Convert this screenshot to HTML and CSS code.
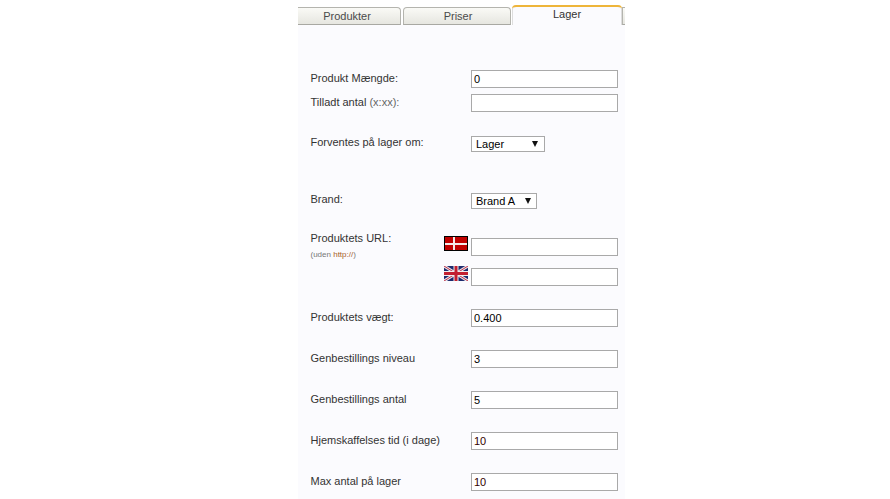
FILE: index.html
```html
<!DOCTYPE html>
<html lang="da">
<head>
<meta charset="utf-8">
<title>Lager</title>
<link rel="stylesheet" href="styles.css">
</head>
<body>
<main class="panel">
  <nav class="tabs">
    <a class="tab tab-a">Produkter</a>
    <a class="tab tab-b">Priser</a>
    <a class="tab tab-active">Lager</a>
    <a class="tab tab-end"></a>
  </nav>
  <form class="form">
    <div class="row r1"><span class="label">Produkt Mængde:</span><input class="field" value="0"></div>
    <div class="row r2"><span class="label">Tilladt antal <span class="muted">(x:xx):</span></span><input class="field"></div>
    <div class="row r3"><span class="label">Forventes på lager om:</span><div class="select s1"><span>Lager</span><i class="arrow"></i></div></div>
    <div class="row r4"><span class="label">Brand:</span><div class="select s2"><span>Brand A</span><i class="arrow"></i></div></div>
    <div class="row r5 url">
      <div class="label urllabel">Produktets URL:<small class="hint">(uden <b>http://</b>)</small></div>
      <div class="flagcol">
        <svg class="flag" viewBox="0 0 24 15" width="24" height="15"><rect width="24" height="15" fill="#000"/><rect x="1" y="1" width="22" height="13" fill="#c00000"/><rect x="9" y="1" width="2" height="13" fill="#f4e8e8"/><rect x="1" y="7" width="22" height="2" fill="#f4e8e8"/></svg>
        <svg class="flag flag2" viewBox="0 0 24 15" width="24" height="15"><rect width="24" height="15" fill="#1c2a6e"/><path d="M0 0L24 15M24 0L0 15" stroke="#e8e4ea" stroke-width="3"/><path d="M0 0L24 15M24 0L0 15" stroke="#c0344a" stroke-width="1"/><path d="M12 0V15M0 7.5H24" stroke="#eee" stroke-width="5"/><path d="M12 0V15M0 7.5H24" stroke="#c21f30" stroke-width="3"/></svg>
      </div>
      <div class="inputs"><input class="field"><input class="field f2"></div>
    </div>
    <div class="row r6"><span class="label">Produktets vægt:</span><input class="field" value="0.400"></div>
    <div class="row r7"><span class="label">Genbestillings niveau</span><input class="field" value="3"></div>
    <div class="row r7"><span class="label">Genbestillings antal</span><input class="field" value="5"></div>
    <div class="row r7"><span class="label">Hjemskaffelses tid (i dage)</span><input class="field dark" value="10"></div>
    <div class="row r7"><span class="label">Max antal på lager</span><input class="field dark" value="10"></div>
  </form>
</main>
</body>
</html>
```
FILE: styles.css
```css
* { box-sizing: border-box; }
html, body { margin: 0; padding: 0; background: #fff; height: 100%; overflow: hidden; }
body { font-family: "Liberation Sans", Arial, sans-serif; font-size: 11px; color: #333; }
.panel { width: 327px; height: 499px; margin-left: 298px; background: #fbfbfe; overflow: hidden; }
.tabs { display: flex; height: 25px; background: #fff; align-items: flex-end; margin-right: 0; }
.tab { display: block; flex: none; height: 18px; margin-top: 7px; text-align: center; font-size: 11px; line-height: 17px; color: #4a4a4a; background: linear-gradient(#fafaf6, #e6e6e0); border: 1px solid #b4b4ae; border-bottom: 1px solid #a8a8a2; border-radius: 4px 4px 0 0; }
.tab-a { width: 108px; margin-left: -5px; margin-right: 2px; }
.tab-b { width: 108px; margin-right: 1px; padding-left: 2px; }
.tab-active { width: 110px; height: 20px; margin-top: 5px; background: #fbfbfe; border: 0; border-top: 2px solid #eeb53a; border-radius: 4px 4px 0 0; color: #333; line-height: 15px; box-shadow: inset 1px 0 #ddd, inset -1px 0 #ddd; }
.tab-end { width: 3px; border-right: 0; border-radius: 0; }
.form { padding: 0 7px 0 12.5px; }
.row { display: flex; align-items: flex-start; }
.label { display: block; width: 160.5px; flex: none; line-height: 16px; }
.muted { color: #666; }
.field { display: block; width: 147px; height: 18px; flex: none; margin: 0; padding: 0 2px; border: 1px solid #a9a9a9; background: #fff; border-radius: 0; font: 11px "Liberation Sans", Arial, sans-serif; color: #000; outline: 0; }
.field.dark { color: #300; }
.r1 { margin-top: 45px; }
.r2 { margin-top: 6px; }
.r3 { margin-top: 24px; }
.r3 .label, .r4 .label { margin-top: -2px; }
.r4 { margin-top: 41px; }
.r5 { margin-top: 29px; }
.r6 { margin-top: 23px; }
.r7 { margin-top: 23px; }
.select { display: flex; align-items: center; justify-content: space-between; height: 16px; border: 1px solid #a9a9a9; background: #fff; color: #000; font-size: 11px; padding: 0 6px 0 4px; flex: none; }
.s1 { width: 74px; }
.s2 { width: 66px; padding-right: 5px; }
.arrow { width: 0; height: 0; border-left: 3.5px solid transparent; border-right: 3.5px solid transparent; border-top: 6px solid #111; }
.urllabel { width: 133.5px; margin-top: -8px; }
.hint { display: block; margin-top: 4px; font-size: 8px; line-height: 10px; color: #777; }
.hint b { font-weight: normal; color: #a8622a; }
.flagcol { width: 27px; flex: none; display: flex; flex-direction: column; margin-top: -2px; }
.flag { display: block; }
.flag2 { margin-top: 15px; }
.inputs { display: flex; flex-direction: column; gap: 12px; }
```
